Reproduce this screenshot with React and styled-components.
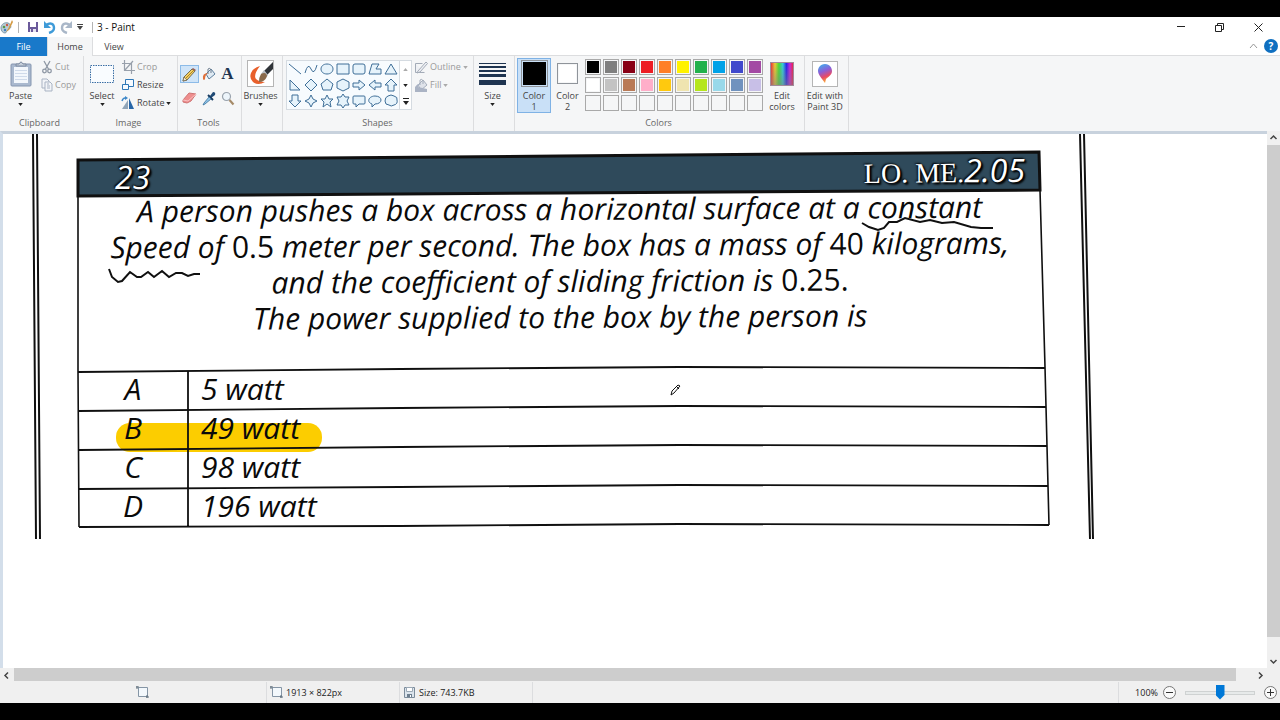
import { useState } from "react";
import styled, { createGlobalStyle, ThemeProvider } from "styled-components";

const theme = {
  colors: {
    blue: "#1979ca",
    ribbon: "#f5f6f7",
    line: "#dcdddf",
    text: "#444444",
    muted: "#9a9a9a",
    edge: "#c8d2dd",
    bar: "#f0f0f0",
    thumb: "#cdcdcd",
    shape: "#3f6f98",
  },
  ui: '"Open Sans", "Noto Sans", sans-serif',
  hand: '"Open Sans", "Noto Sans", sans-serif',
};

const GlobalStyle = createGlobalStyle`
  * {
    box-sizing: border-box;
  }
  body {
    margin: 0;
    background: #000;
  }
  button {
    font: inherit;
    color: inherit;
    background: none;
    border: 0;
    padding: 0;
    margin: 0;
  }
  svg {
    display: block;
    flex: none;
  }
`;

const Screen = styled.div`
  height: 100vh;
  padding: 17px 0;
  background: #000;
  display: flex;
  flex-direction: column;
  font-family: ${({ theme }) => theme.ui};
  font-size: 9px;
  line-height: 12px;
  color: ${({ theme }) => theme.colors.text};
`;

const TitleBar = styled.header`
  height: 20px;
  flex: none;
  display: flex;
  align-items: center;
  justify-content: space-between;
  background: #fff;
`;

const QuickAccess = styled.div`
  display: flex;
  align-items: center;
  gap: 4px;
`;

const Divider = styled.span`
  width: 1px;
  height: 11px;
  background: #b4b4b4;
  margin: 0 ${({ $after }) => $after ?? 0}px 0 ${({ $before }) => $before ?? 0}px;
`;

const Title = styled.h1`
  margin: 0;
  font-size: 10px;
  font-weight: 400;
  color: #111;
`;

const WindowControls = styled.div`
  display: flex;
  padding-right: 2px;
  button {
    width: 39px;
    height: 20px;
    display: grid;
    place-items: center;
  }
`;

const TabBar = styled.nav`
  height: 19px;
  flex: none;
  display: flex;
  background: #fff;
  border-bottom: 1px solid ${({ theme }) => theme.colors.line};
`;

const Tab = styled.button`
  width: ${({ $width }) => $width}px;
  height: 19px;
  color: ${({ $file }) => ($file ? "#fff" : "inherit")};
  background: ${({ $file, $active, theme }) =>
    $file ? theme.colors.blue : $active ? theme.colors.ribbon : "none"};
  border: solid ${({ $active, theme }) => ($active ? theme.colors.line : "transparent")};
  border-width: ${({ $file }) => ($file ? "0" : "0 1px")};
`;

const TabTools = styled.div`
  margin-left: auto;
  display: flex;
  align-items: center;
  gap: 6px;
  padding-right: 2px;
`;

const HelpButton = styled.button`
  width: 14px;
  height: 14px;
  border-radius: 50%;
  background: #0f6fc0;
  color: #fff;
  font-size: 10px;
  font-weight: 700;
`;

const Ribbon = styled.section`
  height: 75px;
  flex: none;
  display: flex;
  background: ${({ theme }) => theme.colors.ribbon};
`;

const Group = styled.div`
  width: ${({ $width }) => $width}px;
  padding: 2px 0 1px ${({ $pad }) => $pad ?? 0}px;
  border-right: 1px solid ${({ theme }) => theme.colors.line};
  display: flex;
  flex-direction: column;
  justify-content: space-between;
`;

const GroupBody = styled.div`
  display: flex;
  align-items: flex-start;
`;

const GroupLabel = styled.div`
  padding-right: 4px;
  text-align: center;
  line-height: 14px;
  color: #666;
`;

const BigButton = styled.button`
  width: ${({ $width }) => $width}px;
  min-height: 55px;
  padding-top: 2px;
  display: flex;
  flex-direction: column;
  align-items: center;
  line-height: 11px;
  background: ${({ $active }) => ($active ? "#c9e0f7" : "none")};
  outline: ${({ $active }) => ($active ? "1px solid #7fb2e5" : "none")};
  outline-offset: -1px;
  > svg {
    margin-top: 2px;
  }
`;

const BigIcon = styled.span`
  height: 27px;
  margin-bottom: 3px;
  display: grid;
  place-items: center;
`;

const SmallList = styled.div`
  display: flex;
  flex-direction: column;
  padding-left: ${({ $pad }) => $pad ?? 0}px;
`;

const SmallButton = styled.button`
  height: 18px;
  display: flex;
  align-items: center;
  gap: 2px;
  white-space: nowrap;
  color: ${({ disabled, theme }) => (disabled ? theme.colors.muted : "inherit")};
`;

const ToolGrid = styled.div`
  display: grid;
  grid-template-columns: repeat(3, 19px);
  row-gap: 6px;
  padding-top: 7px;
`;

const ToolButton = styled.button`
  height: 18px;
  display: grid;
  place-items: center;
  background: ${({ $active }) => ($active ? "#cfe4f8" : "none")};
  outline: ${({ $active }) => ($active ? "1px solid #8cbbe8" : "none")};
  outline-offset: -1px;
`;

const TextGlyph = styled.span`
  font: 700 17px/18px "Liberation Serif", serif;
  color: #1f3551;
`;

const Gallery = styled.div`
  display: flex;
  margin-top: 2px;
  border: 1px solid #d5dbe1;
  background: #fff;
`;

const GalleryGrid = styled.div`
  display: grid;
  grid-template-columns: repeat(7, 16px);
  grid-auto-rows: 16px;
  background: #f7fbfe;
`;

const GalleryScroll = styled.div`
  width: 12px;
  border-left: 1px solid #d5dbe1;
  display: flex;
  flex-direction: column;
  button {
    height: 16px;
    display: grid;
    place-items: center;
  }
`;

const Swatch = styled.span`
  width: ${({ $size }) => $size}px;
  height: ${({ $size }) => $size}px;
  border: 1px solid #8f949a;
  padding: 1px;
  background: ${({ $color }) => $color} content-box;
`;

const Palette = styled.div`
  display: grid;
  grid-template-columns: repeat(10, 16px);
  gap: 2px;
  padding: 1px 0 0 1px;
`;

const PaletteCell = styled.button`
  height: 16px;
  border: 1px solid #a9a9a9;
  padding: 1px;
  background: ${({ $color }) => $color ?? "#f5f6f7"} content-box;
`;

const Spectrum = styled.span`
  width: 24px;
  height: 24px;
  border: 1px solid #a08a9a;
  background: linear-gradient(rgba(128, 128, 128, 0), rgba(128, 128, 128, 0.55)),
    linear-gradient(90deg, #e33, #ec3 18%, #4d3 36%, #3cd 54%, #22e 70%, #c2d 86%, #e24);
`;

const IconFrame = styled.span`
  width: ${({ $size }) => $size}px;
  height: ${({ $size }) => $size}px;
  border: 1px solid #b5b5b5;
  background: #fff;
  display: grid;
  place-items: center;
`;

const Workspace = styled.main`
  flex: 1;
  min-height: 0;
  display: grid;
  grid-template-columns: 1fr 13px;
  grid-template-rows: 1fr 14px;
  background: ${({ theme }) => theme.colors.bar};
`;

const Canvas = styled.div`
  overflow: hidden;
  min-width: 0;
  background: #fff;
  border-top: 3px solid ${({ theme }) => theme.colors.edge};
  border-left: 3px solid #d3deea;
`;

const Scrollbar = styled.div`
  display: flex;
  flex-direction: ${({ $vertical }) => ($vertical ? "column" : "row")};
  background: ${({ theme }) => theme.colors.bar};
  button {
    flex: none;
    min-width: 13px;
    min-height: 13px;
    display: grid;
    place-items: center;
  }
`;

const Thumb = styled.div`
  flex: 1;
  background: ${({ theme }) => theme.colors.thumb};
  margin: ${({ $vertical }) => ($vertical ? "1px 0 18px" : "0 18px 1px 1px")};
`;

// the scanned page, everything on it sits where the scan put it
const Sheet = styled.article`
  position: relative;
  width: 1120px;
  padding: 23px 0 0 74px;
  font-family: ${({ theme }) => theme.hand};
  font-style: italic;
  font-weight: 500;
  color: #0a0a0a;
`;

const Rules = styled.svg`
  position: absolute;
  top: 0;
  left: 0;
`;

const SheetHeader = styled.div`
  position: relative;
  width: 966px;
  height: 34px;
  padding: 0 18px 0 38px;
  display: flex;
  align-items: center;
  justify-content: space-between;
  color: #fff;
  font-size: 32px;
  line-height: 34px;
  text-shadow: 1px 1px 2px #000, -1px -1px 2px #000, 2px 2px 2px #000;
  transform: rotate(-0.4deg);
`;

const Roman = styled.span`
  font-family: "Liberation Serif", serif;
  font-style: normal;
  font-size: 28px;
`;

const Question = styled.p`
  position: relative;
  width: 966px;
  height: 181px;
  margin: 0;
  text-align: center;
  font-size: 30px;
  line-height: 36px;
  white-space: nowrap;
  transform: rotate(-0.3deg);
`;

const Digits = styled.span`
  font-style: normal;
  font-weight: 400;
`;

const Answers = styled.table`
  position: relative;
  width: 966px;
  border-collapse: collapse;
  font-size: 30px;
  line-height: 34px;
  th,
  td {
    height: 39px;
    padding: 0;
    font-weight: 500;
    vertical-align: top;
  }
  th {
    width: 112px;
  }
  td {
    padding-left: 12px;
  }
`;

const StatusBar = styled.footer`
  height: 21px;
  flex: none;
  display: flex;
  background: ${({ theme }) => theme.colors.bar};
  color: #222;
`;

const StatusCell = styled.div`
  width: ${({ $width }) => ($width ? `${$width}px` : "auto")};
  flex: ${({ $width }) => ($width ? "none" : 1)};
  padding-left: ${({ $pad }) => $pad ?? 3}px;
  display: flex;
  align-items: center;
  gap: 3px;
  border-right: 1px solid ${({ theme }) => theme.colors.line};
`;

const ZoomBar = styled.div`
  display: flex;
  align-items: center;
  gap: 5px;
  padding: 0 3px 0 16px;
`;

const ZoomButton = styled.button`
  width: 13px;
  height: 13px;
  border: 1px solid #777;
  border-radius: 50%;
  background: #fafafa;
  display: grid;
  place-items: center;
`;

const ZoomSlider = styled.input`
  appearance: none;
  width: 70px;
  height: 16px;
  margin: 0 4px;
  background: none;
  &::-webkit-slider-runnable-track {
    height: 4px;
    background: #e7eaea;
    border: 1px solid #cfd2d2;
  }
  &::-webkit-slider-thumb {
    appearance: none;
    width: 9px;
    height: 15px;
    margin-top: -7px;
    background: #0078d7;
    clip-path: polygon(0 0, 100% 0, 100% 70%, 50% 100%, 0 70%);
  }
`;

const Caret = ({ color = "#222", up }) => (
  <svg width="5" height="3" viewBox="0 0 6 4">
    <path d={up ? "M0 4h6L3 0z" : "M0 0h6L3 4z"} fill={color} />
  </svg>
);

const Chevron = ({ d }) => (
  <svg width="9" height="9" viewBox="0 0 9 9" fill="none" stroke="#444" strokeWidth="1.5">
    <path d={d} />
  </svg>
);

const PaletteIcon = () => (
  <svg width="14" height="14" viewBox="0 0 14 14">
    <path d="M1 8C1 4 5 2 8 3s4 5 1 6-2 4-4 4-4-2-4-5z" fill="#b9cbd6" stroke="#7d99aa" />
    <circle cx="4" cy="7" r="1.3" fill="#5a9a4c" />
    <circle cx="7" cy="5" r="1.2" fill="#ca5a45" />
    <circle cx="5" cy="10" r="1.2" fill="#3f7fc0" />
    <path d="M12 0L8 9l-2 3 3-2 4-8z" fill="#d49a43" />
  </svg>
);

const SaveIcon = ({ color = "#6b5a9b" }) => (
  <svg width="12" height="12" viewBox="0 0 12 12">
    <path d="M1 1h10v10H1z" fill={color} />
    <path d="M3 1h6v5H3z" fill="#fff" />
    <path d="M3 8h6v3H3z" fill="#e6e4f0" />
    <path d="M4 8h2v3H4z" fill={color} />
  </svg>
);

const FileSizeIcon = () => (
  <svg width="13" height="13" viewBox="0 0 13 13">
    <path d="M1.500 1.500h10v10h-10z" fill="#dbe4ec" stroke="#7b8b9a" />
    <path d="M3.500 1.500h6v4h-6z" fill="#fff" stroke="#9aa8b5" />
    <path d="M4 8h5v3H4z" fill="#6d7e8e" />
    <path d="M7 9h1v2H7z" fill="#fff" />
  </svg>
);

const UndoIcon = ({ color, flip }) => (
  <svg width="13" height="13" viewBox="0 0 13 13">
    <g transform={flip ? "matrix(-1 0 0 1 13 0)" : undefined}>
      <path d="M3 4c5-3 8-1 8 3 0 2-2 4-5 5" fill="none" stroke={color} strokeWidth="2.400" />
      <path d="M1 0v7h7z" fill={color} />
    </g>
  </svg>
);

const PasteIcon = () => (
  <svg width="22" height="26" viewBox="0 0 22 26">
    <rect x="1" y="3" width="20" height="22" rx="1" fill="#aab9cf" stroke="#8696b0" />
    <rect x="4" y="6" width="14" height="16" fill="#f3f7fc" />
    <path d="M5 9.500h12M5 12.500h12M5 15.500h12M5 18.500h12" stroke="#cfdaea" />
    <path d="M6 5V3h3q2-4 4 0h3v2z" fill="#c6cfdb" stroke="#7c8aa0" />
  </svg>
);

const CutIcon = () => (
  <svg width="12" height="14" viewBox="0 0 12 14" fill="none" stroke="#8f98a5" strokeWidth="1.300">
    <path d="M3 1l5 9M9 1L4 10" />
    <circle cx="3.500" cy="11" r="1.800" />
    <circle cx="8.500" cy="11" r="1.800" />
  </svg>
);

const CopyIcon = () => (
  <svg width="12" height="14" viewBox="0 0 12 14" fill="#f2f4f8" stroke="#a9b3c3">
    <path d="M1 1h5l2 2v7H1z" />
    <path d="M4 4h5l2 2v7H4z" />
    <path d="M6 8h3M6 10h3M6 6h2" />
  </svg>
);

const SelectIcon = () => (
  <svg width="24" height="20" viewBox="0 0 24 20">
    <rect x="0.500" y="1.500" width="23" height="17" fill="#f9fcff" stroke="#3a6ea5" strokeDasharray="1.500 1" />
  </svg>
);

const CropIcon = () => (
  <svg width="14" height="14" viewBox="0 0 14 14" fill="none" stroke="#98a0ab" strokeWidth="1.200">
    <path d="M3.500 0v10.500H14M1 3.500h9.500V14M4 10l8-9" />
  </svg>
);

const ResizeIcon = () => (
  <svg width="14" height="14" viewBox="0 0 14 14" fill="#f7fbff" stroke="#2f78b7">
    <path d="M4.500 1.500h8v7h-8z" />
    <path d="M1.500 6.500h6v5h-6z" />
  </svg>
);

const RotateIcon = () => (
  <svg width="14" height="14" viewBox="0 0 14 14">
    <path d="M7 4v9H1z" fill="#8fa4b8" />
    <path d="M8 2v11h5z" fill="#2766a8" />
    <path d="M1 5q1-3 3-3" stroke="#3b86c8" fill="none" strokeWidth="1.500" />
    <path d="M4 0l3 2-3 2z" fill="#3b86c8" />
  </svg>
);

const PencilIcon = () => (
  <svg width="15" height="15" viewBox="0 0 15 15">
    <path d="M2 10L10 2l3 2-8 9-4 1z" fill="#f4cf63" stroke="#5b5137" strokeWidth="0.800" />
    <path d="M10 2l1-1 3 2-1 1z" fill="#9a5b50" />
    <path d="M4 11l8-8" stroke="#a98428" />
    <path d="M1 14l1-4 3 3z" fill="#f7ead0" stroke="#5b5137" strokeWidth="0.600" />
  </svg>
);

const BucketIcon = ({ muted }) => (
  <svg width="14" height="15" viewBox="0 0 14 15">
    <path d="M4 7l5-5 4 5-6 5z" fill={muted ? "#dfe3ea" : "#dfeaf3"} stroke={muted ? "#a5aebc" : "#5d7f9e"} />
    <path d="M6 7V2q2-2 3 1v3" fill="none" stroke={muted ? "#a5aebc" : "#6f7f90"} />
    <path d={muted ? "M1 9q3-4 5-3L4 9l9 2v3H1z" : "M1 12q-1-6 5-6-3 2-3 6-1 2-2 0z"} fill={muted ? "#aab3c4" : "#e0703a"} />
  </svg>
);

const EraserIcon = () => (
  <svg width="15" height="14" viewBox="0 0 15 14">
    <path d="M1 9l6-7 7 1-5 7-4 2-4-1z" fill="#ee8e8e" stroke="#cf7474" />
    <path d="M1 9l5 1 8-7" stroke="#f9c1c1" fill="none" />
  </svg>
);

const PickerIcon = () => (
  <svg width="14" height="15" viewBox="0 0 14 15">
    <path d="M8 5l3-4q3 0 2 3L9 7z" fill="#1f4a75" />
    <path d="M6 4l5 5" stroke="#163a60" strokeWidth="2" />
    <path d="M7 6l2 2-6 5-2 1 1-2z" fill="#8fc4e8" stroke="#39719d" strokeWidth="0.800" />
  </svg>
);

const MagnifierIcon = () => (
  <svg width="14" height="15" viewBox="0 0 14 15">
    <circle cx="5.500" cy="5.500" r="4" fill="#edf5fb" stroke="#9aa3ad" strokeWidth="1.200" />
    <path d="M8.500 9l4 4.500" stroke="#a58a68" strokeWidth="2.200" />
  </svg>
);

const BrushIcon = () => (
  <svg width="25" height="25" viewBox="0 0 25 25">
    <path d="M12 5Q5 7 3 12t2 9q5 4 12 0-6 0-9-3-3-4 4-13z" fill="#e8602c" />
    <path d="M25 1L16 10l3 4 6-6z" fill="#2f3338" />
    <path d="M16 9l4 5-2 3-5-4z" fill="#b9bec4" />
    <path d="M13 13q5-3 6 2-2 6-8 6 0-5 2-8z" fill="#8a6a4b" />
  </svg>
);

const OutlineIcon = () => (
  <svg width="14" height="14" viewBox="0 0 14 14" fill="#eef0f4" stroke="#a3abb7">
    <path d="M1.500 3.500v9h9" />
    <path d="M1.500 3.500h7M4 11l8-9 1.500 1.500L6 12l-3 1z" />
  </svg>
);

const LineWeights = () => (
  <svg width="27" height="24" viewBox="0 0 27 24" fill="#1e3450">
    <path d="M0 1h27v1H0zM0 4h27v2H0zM0 8h27v2H0zM0 12h27v3H0zM0 18h27v5H0z" />
  </svg>
);

const BalloonIcon = () => (
  <svg width="18" height="22" viewBox="0 0 18 22">
    <defs>
      <linearGradient id="balloon" x1="0" y1="0" x2="0.300" y2="1">
        <stop offset="0" stopColor="#35b8ef" />
        <stop offset="0.450" stopColor="#8a5fd8" />
        <stop offset="0.750" stopColor="#e84a67" />
        <stop offset="1" stopColor="#f7a23b" />
      </linearGradient>
    </defs>
    <path d="M9 1c5 0 7 4 7 7 0 4-4 6-6 8l-1 4-3-4C4 13 2 11 2 8c0-3 2-7 7-7z" fill="url(#balloon)" />
  </svg>
);

const CanvasSizeIcon = () => (
  <svg width="13" height="13" viewBox="0 0 13 13">
    <path d="M2.500 1.500h9v9h-9z" fill="#f3f8fc" stroke="#8595a5" />
    <path d="M0 1h3M1 0v3M11 9v3M10 11h3" stroke="#5d6c7a" />
  </svg>
);

const shapes = [
  ["Line", "M2 3l12 10"],
  ["Curve", "M2 12Q5 1 8 8t6-4"],
  ["Oval", "M8 3c8 0 8 10 0 10S0 3 8 3z"],
  ["Rectangle", "M2 3h12v10H2z"],
  ["Rounded rectangle", "M4 3h8q2 0 2 2v6q0 2-2 2H4q-2 0-2-2V5q0-2 2-2z"],
  ["Polygon", "M2 13L5 3h7L9 8h5v5z"],
  ["Triangle", "M8 3l6 10H2z"],
  ["Right triangle", "M3 3v10h10z"],
  ["Diamond", "M8 2l6 6-6 6-6-6z"],
  ["Pentagon", "M8 2l6 5-2 6H4L2 7z"],
  ["Hexagon", "M8 2l6 3v6l-6 3-6-3V5z"],
  ["Right arrow", "M2 6h6V3l6 5-6 5v-3H2z"],
  ["Left arrow", "M14 6H8V3L2 8l6 5v-3h6z"],
  ["Up arrow", "M8 2l6 6h-3v6H5V8H2z"],
  ["Down arrow", "M8 14l6-6h-3V2H5v6H2z"],
  ["Four-point star", "M8 2l2 4 4 2-4 2-2 4-2-4-4-2 4-2z"],
  ["Five-point star", "M8 2l2 4h4l-3 3 1 5-4-3-4 3 1-5-3-3h4z"],
  ["Six-point star", "M8 1l2 3h4l-2 4 2 4h-4l-2 3-2-3H2l2-4-2-4h4z"],
  ["Rounded callout", "M3 3h10q1 0 1 1v6q0 1-1 1H8l-3 3v-3H3q-1 0-1-1V4q0-1 1-1z"],
  ["Oval callout", "M8 3c8 0 8 8 0 8l-3 3v-3C-1 9 2 3 8 3z"],
  ["Cloud callout", "M5 3q3-2 6 0 4 1 3 4 1 4-3 5-3 2-5 0-4 0-4-4 0-4 3-5z"],
];

const paletteColors = [
  "#000000", "#7f7f7f", "#880015", "#ed1c24", "#ff7f27",
  "#fff200", "#22b14c", "#00a2e8", "#3f48cc", "#a349a4",
  "#ffffff", "#c3c3c3", "#b97a57", "#ffaec9", "#ffc90e",
  "#efe4b0", "#b5e61d", "#99d9ea", "#7092be", "#c8bfe7",
  ...Array(10).fill(null),
];

const answers = [
  ["A", "5 watt"],
  ["B", "49 watt"],
  ["C", "98 watt"],
  ["D", "196 watt"],
];

const ScanRules = () => (
  <Rules width="1120" height="410" viewBox="3 134 1120 410" fill="none" stroke="#101010">
    <path d="M33 134L36 539M37 134L40 539M1080 134L1090 539M1084 134L1093 539" strokeWidth="2" />
    <path d="M78 160L560 156 1039 152 1040 190 560 193 78 196z" fill="#2f4a5b" strokeWidth="3" />
    <path d="M78 196L78 372 79 527M1040 190L1045 367 1049 525" strokeWidth="1.600" />
    <rect x="116" y="423" width="206" height="29" rx="14" fill="#fccd00" stroke="none" />
    <path d="M78 372L400 369 680 367 1045 368" strokeWidth="1.800" />
    <path d="M78 411L400 408 680 406 1046 407M79 450L400 447 680 445 1047 446" strokeWidth="1.800" />
    <path d="M79 489L400 487 680 485 1048 486M79 527L400 526 680 524 1049 525M188 371V527" strokeWidth="1.800" />
    <path
      d="M109 269L112 277 118 282 122 281 130 272 137 277 141 277 148 272 154 277 162 271 169 277 176 273 182 273 188 276 194 274 200 274"
      strokeWidth="2"
    />
    <path
      d="M862 223L869 227 878 230 884 228 889 222 897 222 905 218 920 222 930 220 942 223 954 222 971 227 981 228 993 228"
      strokeWidth="2"
    />
    <path d="M671 395l1-4 6-6 2 1-6 7zM677 387l2 2" fill="#fff" strokeWidth="1" />
  </Rules>
);

const Scan = () => (
  <Sheet>
    <ScanRules />
    <SheetHeader>
      <span>23</span>
      <span>
        <Roman>LO. ME.</Roman>2.05
      </span>
    </SheetHeader>
    <Question>
      A person pushes a box across a horizontal surface at a constant
      <br />
      Speed of <Digits>0.5</Digits> meter per second. The box has a mass of <Digits>40</Digits> kilograms,
      <br />
      and the coefficient of sliding friction is <Digits>0.25.</Digits>
      <br />
      The power supplied to the box by the person is
    </Question>
    <Answers>
      <tbody>
        {answers.map(([letter, text]) => (
          <tr key={letter}>
            <th scope="row">{letter}</th>
            <td>{text}</td>
          </tr>
        ))}
      </tbody>
    </Answers>
  </Sheet>
);

const RibbonBar = ({ tool, setTool }) => {
  const tools = [
    ["Pencil", <PencilIcon />],
    ["Fill with color", <BucketIcon />],
    ["Text", <TextGlyph>A</TextGlyph>],
    ["Eraser", <EraserIcon />],
    ["Color picker", <PickerIcon />],
    ["Magnifier", <MagnifierIcon />],
  ];

  return (
    <Ribbon>
      <Group $width={84}>
        <GroupBody>
          <BigButton $width={41}>
            <BigIcon><PasteIcon /></BigIcon>
            Paste
            <Caret />
          </BigButton>
          <SmallList>
            <SmallButton disabled><CutIcon />Cut</SmallButton>
            <SmallButton disabled><CopyIcon />Copy</SmallButton>
          </SmallList>
        </GroupBody>
        <GroupLabel>Clipboard</GroupLabel>
      </Group>
      <Group $width={94}>
        <GroupBody>
          <BigButton $width={36}>
            <BigIcon><SelectIcon /></BigIcon>
            Select
            <Caret />
          </BigButton>
          <SmallList $pad={1}>
            <SmallButton disabled><CropIcon />Crop</SmallButton>
            <SmallButton><ResizeIcon />Resize</SmallButton>
            <SmallButton><RotateIcon />Rotate <Caret /></SmallButton>
          </SmallList>
        </GroupBody>
        <GroupLabel>Image</GroupLabel>
      </Group>
      <Group $width={64} $pad={2}>
        <ToolGrid>
          {tools.map(([name, icon]) => (
            <ToolButton key={name} aria-label={name} $active={tool === name} onClick={() => setTool(name)}>
              {icon}
            </ToolButton>
          ))}
        </ToolGrid>
        <GroupLabel>Tools</GroupLabel>
      </Group>
      <Group $width={41}>
        <BigButton $width={37}>
          <BigIcon><IconFrame $size={27}><BrushIcon /></IconFrame></BigIcon>
          Brushes
          <Caret />
        </BigButton>
      </Group>
      <Group $width={191} $pad={3}>
        <GroupBody>
          <Gallery>
            <GalleryGrid>
              {shapes.map(([name, d]) => (
                <button key={name} aria-label={name}>
                  <svg width="16" height="16" viewBox="0 0 16 16" fill="#e6f3fb" stroke={theme.colors.shape}>
                    <path d={d} fill={name === "Curve" ? "none" : undefined} />
                  </svg>
                </button>
              ))}
            </GalleryGrid>
            <GalleryScroll>
              <button aria-label="Scroll up"><Caret up color="#aaa" /></button>
              <button aria-label="Scroll down"><Caret /></button>
              <button aria-label="More shapes">
                <svg width="6" height="7" viewBox="0 0 6 7" fill="#222">
                  <path d="M0 0h6v1H0zM0 3h6L3 7z" />
                </svg>
              </button>
            </GalleryScroll>
          </Gallery>
          <SmallList $pad={2}>
            <SmallButton disabled><OutlineIcon />Outline <Caret color="#aaa" /></SmallButton>
            <SmallButton disabled><BucketIcon muted />Fill <Caret color="#aaa" /></SmallButton>
          </SmallList>
        </GroupBody>
        <GroupLabel>Shapes</GroupLabel>
      </Group>
      <Group $width={41}>
        <BigButton $width={37}>
          <BigIcon><LineWeights /></BigIcon>
          Size
          <Caret />
        </BigButton>
      </Group>
      <Group $width={290} $pad={2}>
        <GroupBody>
          <BigButton $width={34} $active>
            <BigIcon><Swatch $size={27} $color="#000" /></BigIcon>
            Color
            <br />1
          </BigButton>
          <BigButton $width={33}>
            <BigIcon><Swatch $size={21} $color="#fff" /></BigIcon>
            Color
            <br />2
          </BigButton>
          <Palette>
            {paletteColors.map((color, i) => (
              <PaletteCell key={i} $color={color} aria-label={color ?? "Empty color"} />
            ))}
          </Palette>
          <BigButton $width={38}>
            <BigIcon><Spectrum /></BigIcon>
            Edit
            <br />
            colors
          </BigButton>
        </GroupBody>
        <GroupLabel>Colors</GroupLabel>
      </Group>
      <Group $width={44}>
        <BigButton $width={40}>
          <BigIcon><IconFrame $size={26}><BalloonIcon /></IconFrame></BigIcon>
          Edit with
          <br />
          Paint 3D
        </BigButton>
      </Group>
    </Ribbon>
  );
};

export default function App() {
  const [tool, setTool] = useState("Pencil");
  const [zoom, setZoom] = useState(50);

  return (
    <ThemeProvider theme={theme}>
      <GlobalStyle />
      <Screen>
        <TitleBar>
          <QuickAccess>
            <PaletteIcon />
            <Divider $after={4} />
            <SaveIcon />
            <UndoIcon color="#3f9bd8" />
            <UndoIcon color="#a9b7c8" flip />
            <svg width="6" height="6" viewBox="0 0 6 6" fill="#444">
              <path d="M0 0h6v1H0zM0 2h6L3 6z" />
            </svg>
            <Divider $before={5} />
            <Title>3 - Paint</Title>
          </QuickAccess>
          <WindowControls>
            <button aria-label="Minimize">
              <svg width="8" height="2"><path d="M0 0h8v1H0z" fill="#222" /></svg>
            </button>
            <button aria-label="Restore">
              <svg width="9" height="9" viewBox="0 0 9 9" fill="none" stroke="#222">
                <path d="M0.500 2.500h6v6h-6zM2.500 2.500v-2h6v6h-2" />
              </svg>
            </button>
            <button aria-label="Close">
              <svg width="9" height="9" viewBox="0 0 9 9" stroke="#222"><path d="M0.500 0.500l8 8M8.500 0.500l-8 8" /></svg>
            </button>
          </WindowControls>
        </TitleBar>
        <TabBar>
          <Tab $file $width={47}>File</Tab>
          <Tab $active $width={46}>Home</Tab>
          <Tab $width={42}>View</Tab>
          <TabTools>
            <button aria-label="Collapse ribbon">
              <svg width="9" height="6" viewBox="0 0 9 6" fill="none" stroke="#999"><path d="M1 5l3.500-4L8 5" /></svg>
            </button>
            <HelpButton aria-label="Help">?</HelpButton>
          </TabTools>
        </TabBar>
        <RibbonBar tool={tool} setTool={setTool} />
        <Workspace>
          <Canvas>
            <Scan />
          </Canvas>
          <Scrollbar $vertical>
            <button aria-label="Up"><Chevron d="M1.500 6l3-3 3 3" /></button>
            <Thumb $vertical />
            <button aria-label="Down"><Chevron d="M1.500 3l3 3 3-3" /></button>
          </Scrollbar>
          <Scrollbar>
            <button aria-label="Left"><Chevron d="M6 1.500l-3 3 3 3" /></button>
            <Thumb />
            <button aria-label="Right"><Chevron d="M3 1.500l3 3-3 3" /></button>
          </Scrollbar>
        </Workspace>
        <StatusBar>
          <StatusCell $width={267} $pad={136}><CanvasSizeIcon /></StatusCell>
          <StatusCell $width={133}><CanvasSizeIcon />1913 × 822px</StatusCell>
          <StatusCell $width={133}><FileSizeIcon />Size: 743.7KB</StatusCell>
          <StatusCell />
          <ZoomBar>
            <label htmlFor="zoom">100%</label>
            <ZoomButton aria-label="Zoom out">
              <svg width="7" height="7"><path d="M0 3h7v1H0z" fill="#333" /></svg>
            </ZoomButton>
            <ZoomSlider id="zoom" type="range" value={zoom} onChange={(e) => setZoom(e.target.value)} />
            <ZoomButton aria-label="Zoom in">
              <svg width="7" height="7"><path d="M0 3h7v1H0zM3 0h1v7H3z" fill="#333" /></svg>
            </ZoomButton>
          </ZoomBar>
        </StatusBar>
      </Screen>
    </ThemeProvider>
  );
}
